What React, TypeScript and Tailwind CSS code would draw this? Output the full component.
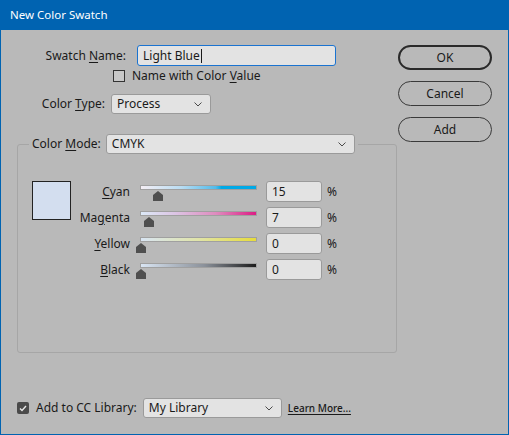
import React from "react";

const FONT = { fontFamily: '"Noto Sans", "Open Sans", sans-serif' };

const SLIDERS = [
  { key: "C", rest: "yan", pre: "", value: "15", pos: 17, bar: "bg-[linear-gradient(to_right,#f4eef4,#b9dcf2_35%,#52bbea_65%,#00a9e6_70%,#00a9e6)]" },
  { key: "g", rest: "enta", pre: "Ma", value: "7", pos: 8, bar: "bg-[linear-gradient(to_right,#dce9f7,#dcc4e4_30%,#df8cbf_65%,#dc1d85)]" },
  { key: "Y", rest: "ellow", pre: "", value: "0", pos: 0, bar: "bg-[linear-gradient(to_right,#d9e5f3,#e0e4a8_50%,#e7dc3a)]" },
  { key: "B", rest: "lack", pre: "", value: "0", pos: 0, bar: "bg-[linear-gradient(to_right,#d9e5f3,#8b919a_55%,#1c1c1c)]" },
];

function Chevron() {
  return (
    <svg width="8" height="5" viewBox="0 0 8 5" className="shrink-0">
      <polyline points="0.5,0.5 4,4 7.5,0.5" fill="none" stroke="#4a4a4a" strokeWidth="1" />
    </svg>
  );
}

function Select({ value, className }: { value: string; className: string }) {
  return (
    <div
      className={`flex h-[20px] items-center justify-between rounded-[3px] border border-[#9a9a9a] bg-[#e3e3e3] pl-[5px] pr-[8px] text-[12px] text-[#1a1a1a] ${className}`}
    >
      <span>{value}</span>
      <Chevron />
    </div>
  );
}

function Thumb() {
  return (
    <svg width="10" height="10" viewBox="0 0 10 10">
      <polygon points="5,0 10,4 10,10 0,10 0,4" fill="#4f4f4f" />
    </svg>
  );
}

function Button({ label, primary }: { label: string; primary?: boolean }) {
  return (
    <div
      className={`flex h-[25px] w-[94px] items-center justify-center rounded-full text-[12px] text-[#1a1a1a] ${
        primary ? "border-2 border-[#2a2a2a]" : "border border-[#3a3a3a]"
      }`}
    >
      {label}
    </div>
  );
}

export default function App() {
  return (
    <div style={FONT} className="flex h-[435px] w-[509px] flex-col border-x border-b border-[#0063b1] bg-[#b9b9b9]">
      {/* title bar */}
      <div className="flex h-[30px] shrink-0 items-center bg-[#0063b1] pl-[9px] text-[11.5px] text-white">
        New Color Swatch
      </div>

      <div className="flex flex-1">
        {/* left column */}
        <div className="flex w-[396px] flex-col">
          <div className="mt-[15px] flex items-center">
            <span className="w-[125px] text-right text-[12px] text-[#1a1a1a]">
              Swatch <span className="underline underline-offset-2">N</span>ame:
            </span>
            <div className="ml-[11px] flex h-[21px] w-[199px] items-center rounded-[3px] border border-[#1a73d0] bg-[#e3e3e3] pl-[5px] text-[12px] text-[#1a1a1a]">
              Light Blue<span className="ml-px h-[14px] w-px bg-[#1a1a1a]" />
            </div>
          </div>

          <div className="mt-[4px] flex h-[12px] items-center">
            <div className="ml-[112px] h-[12px] w-[12px] border border-[#333] bg-[#c8c8c8]" />
            <span className="ml-[7px] text-[12px] leading-[12px] text-[#1a1a1a]">
              Name with Color <span className="underline underline-offset-2">V</span>alue
            </span>
          </div>

          <div className="mt-[12px] flex items-center">
            <span className="w-[104px] text-right text-[12px] text-[#1a1a1a]">
              Color <span className="underline underline-offset-2">T</span>ype:
            </span>
            <Select value="Process" className="ml-[6px] w-[100px]" />
          </div>

          <fieldset className="ml-[16px] mt-[20px] h-[219px] w-[380px] rounded-[3px] border border-[#a6a6a6]">
            <legend className="ml-[11px] flex items-center px-[3px]">
              <span className="text-[12px] text-[#1a1a1a]">
                Color <span className="underline underline-offset-2">M</span>ode:
              </span>
              <Select value="CMYK" className="ml-[5px] w-[249px]" />
            </legend>

            <div className="ml-[14px] mt-[27px] flex">
              <div className="h-[39px] w-[39px] shrink-0 border border-[#222] bg-[#d3deef]" />
              <div className="flex flex-col gap-[5px]">
                {SLIDERS.map((s) => (
                  <div key={s.rest} className="flex h-[21px] items-center">
                    <span className="w-[59px] text-right text-[12px] text-[#1a1a1a]">
                      {s.pre}
                      <span className="underline underline-offset-2">{s.key}</span>
                      {s.rest}
                    </span>
                    <div className="relative ml-[10px] h-[21px] w-[117px]">
                      <div className={`mt-[4px] h-[5px] w-full border border-[#a0a0a0] ${s.bar}`} />
                      <div className="absolute top-[10px]" style={{ left: s.pos - 4 }}>
                        <Thumb />
                      </div>
                    </div>
                    <div className="ml-[9px] flex h-[21px] w-[56px] items-center rounded-[3px] border border-[#9a9a9a] bg-[#e3e3e3] pl-[5px] text-[12px] text-[#1a1a1a]">
                      {s.value}
                    </div>
                    <span className="ml-[5px] text-[12px] text-[#1a1a1a]">%</span>
                  </div>
                ))}
              </div>
            </div>
          </fieldset>

          <div className="mb-[16px] mt-auto flex items-center">
            <div className="ml-[16px] flex h-[12px] w-[12px] items-center justify-center rounded-[2px] bg-[#4a4a4a]">
              <svg width="8" height="7" viewBox="0 0 8 7">
                <polyline points="1,3.5 3,5.5 7,1" fill="none" stroke="#e8e8e8" strokeWidth="1.4" />
              </svg>
            </div>
            <span className="ml-[7px] text-[12px] text-[#1a1a1a]">Add to CC Library:</span>
            <Select value="My Library" className="ml-[6px] w-[139px]" />
            <span className="ml-[6px] text-[10px] font-medium text-[#1a1a1a] underline underline-offset-2">
              Learn More...
            </span>
          </div>
        </div>

        {/* buttons */}
        <div className="ml-[1px] mt-[15px] flex flex-col gap-[11px]">
          <Button label="OK" primary />
          <Button label="Cancel" />
          <Button label="Add" />
        </div>
      </div>
    </div>
  );
}
